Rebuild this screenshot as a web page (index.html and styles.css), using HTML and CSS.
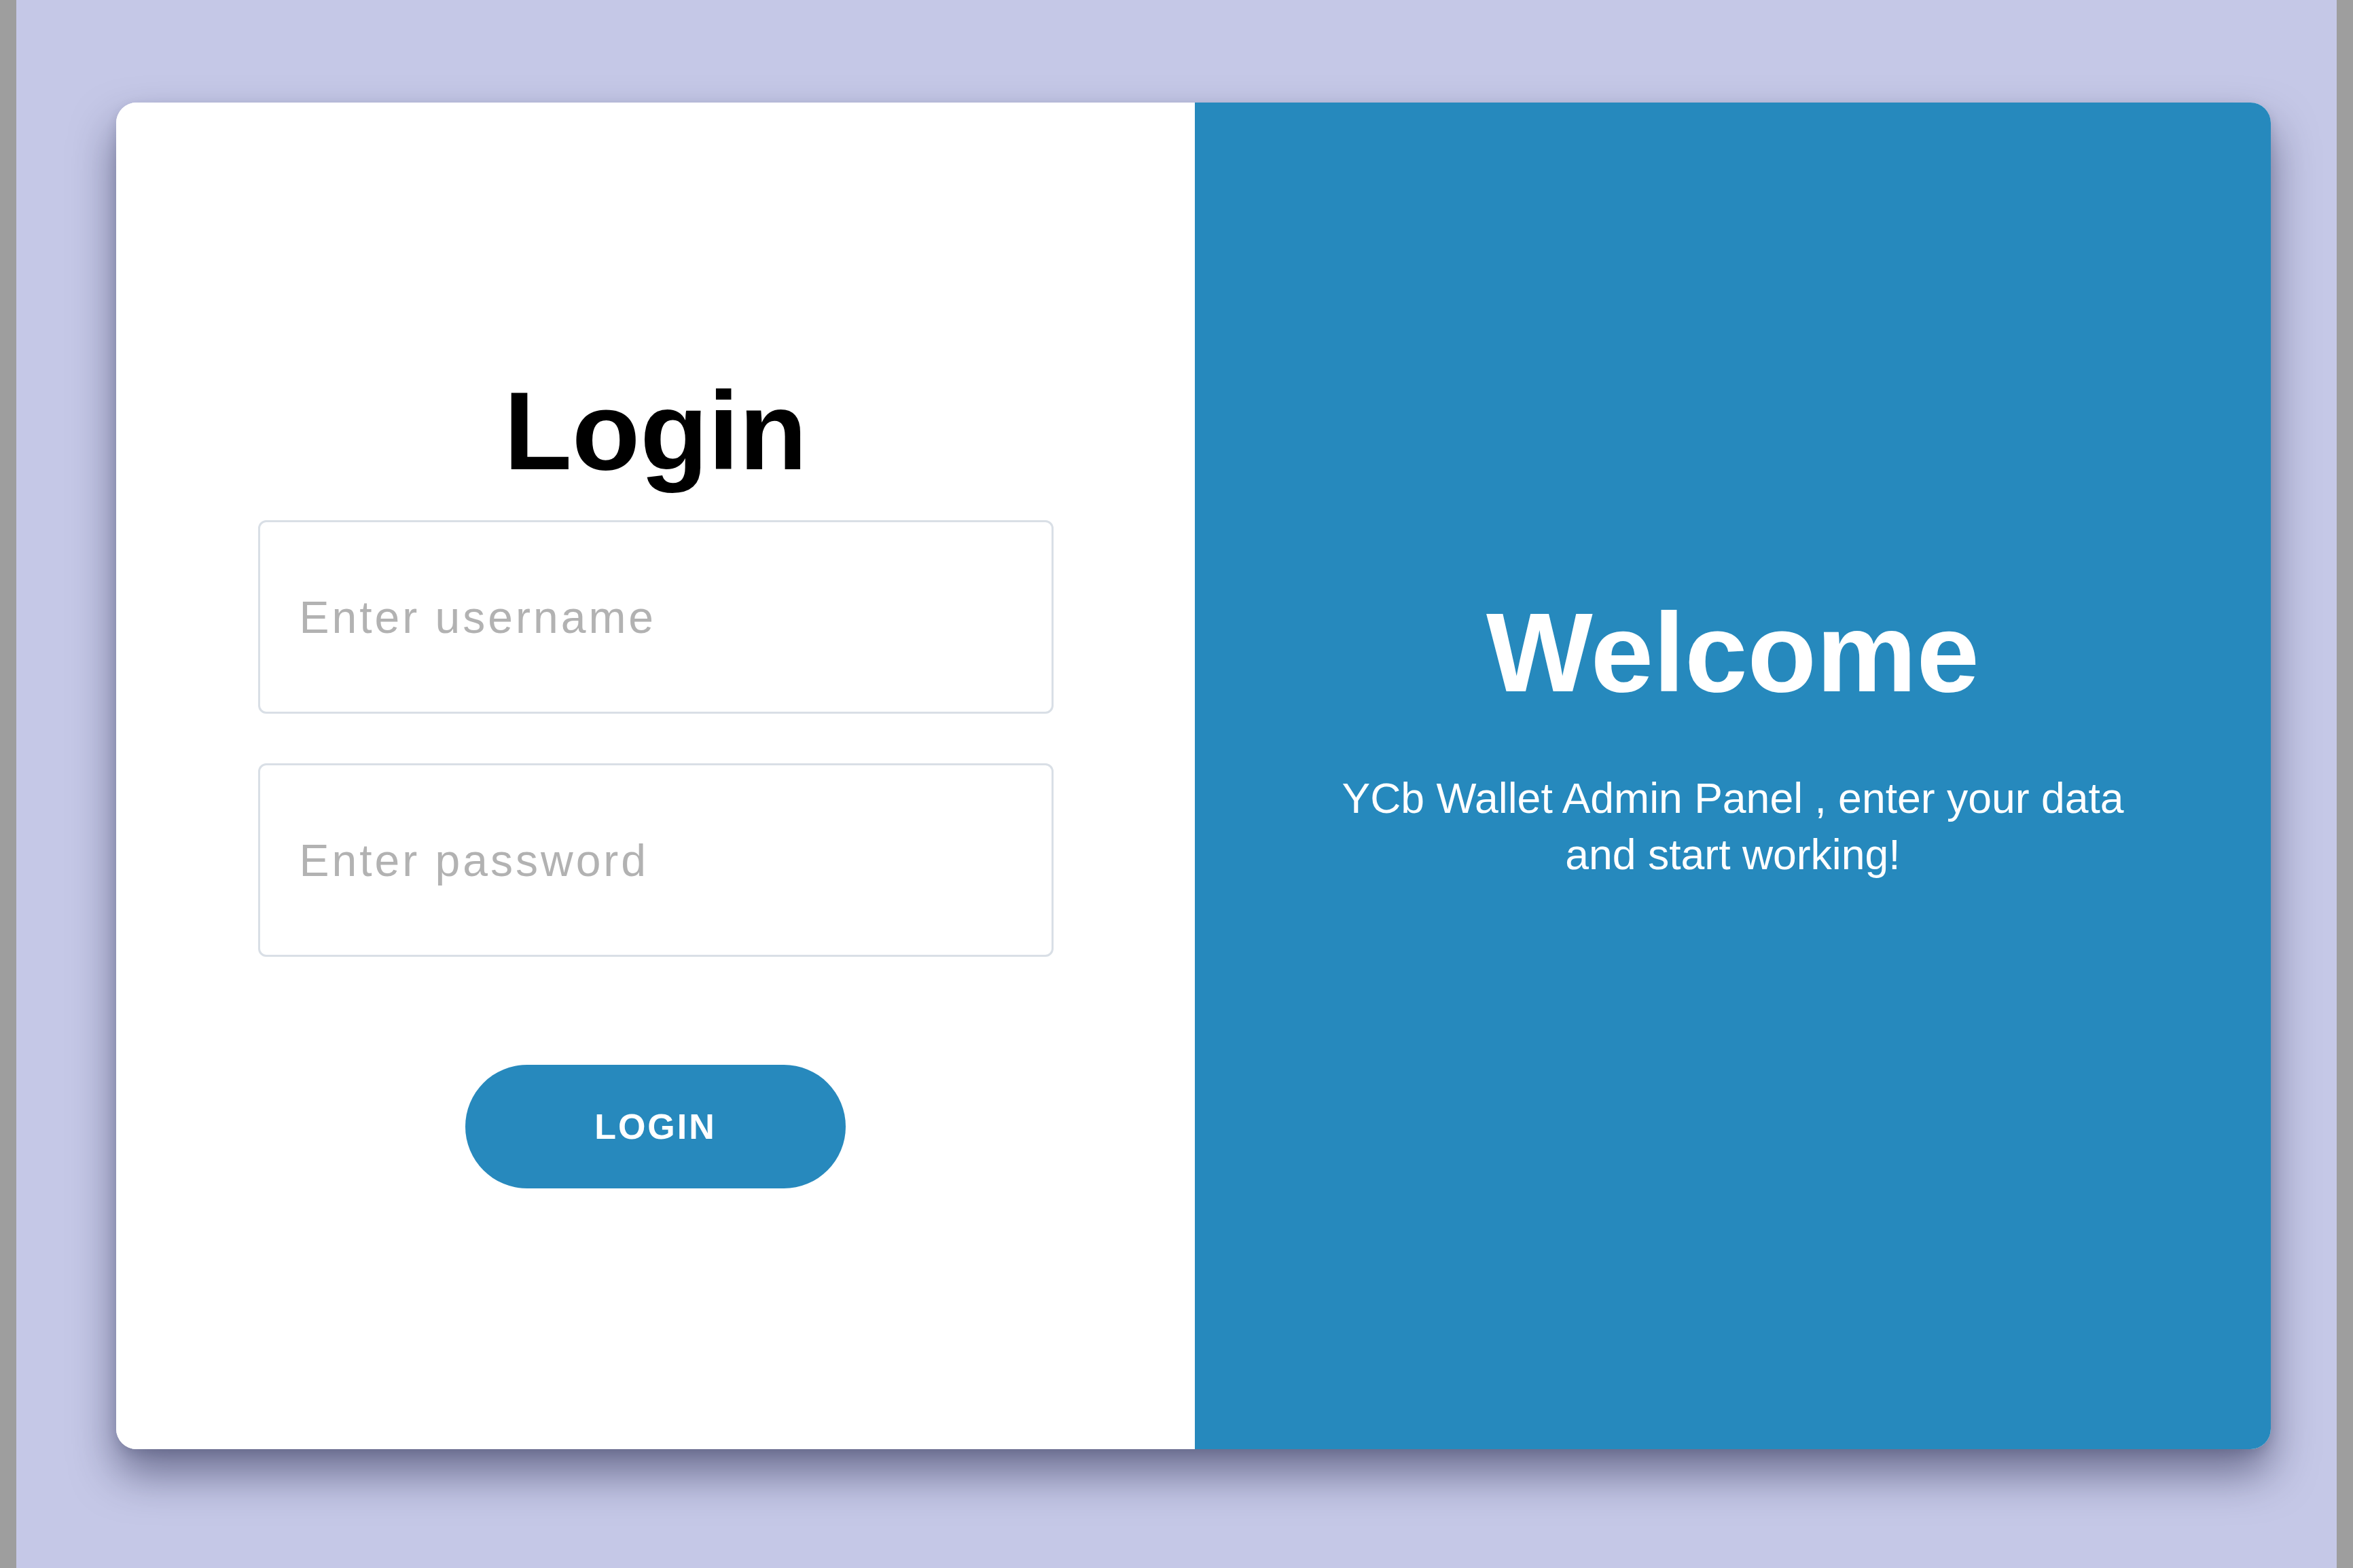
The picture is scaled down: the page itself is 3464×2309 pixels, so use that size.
FILE: index.html
```html
<!DOCTYPE html>
<html lang="en">
<head>
<meta charset="utf-8">
<title>YCb Wallet Admin Panel - Login</title>
<link rel="stylesheet" href="styles.css">
</head>
<body>
<main class="stage">
  <section class="card">
    <div class="panel panel-form">
      <form class="login-form" onsubmit="return false;">
        <h1 class="title">Login</h1>
        <input class="field" type="text" placeholder="Enter username">
        <input class="field field-password" type="password" placeholder="Enter password">
        <button class="btn" type="submit">LOGIN</button>
      </form>
    </div>
    <div class="panel panel-welcome">
      <h1 class="welcome-title">Welcome</h1>
      <p class="welcome-text">YCb Wallet Admin Panel , enter your data and start working!</p>
    </div>
  </section>
</main>
</body>
</html>
```

FILE: styles.css
```css
* {
  box-sizing: border-box;
}

html, body {
  margin: 0;
  padding: 0;
  height: 100%;
}

body {
  background: #9e9e9e;
  font-family: "Liberation Sans", Arial, sans-serif;
}

.stage {
  margin: 0 24px;
  height: 100vh;
  background: #c5c8e7;
  display: flex;
  padding: 151px 97px 175px 147px;
}

.card {
  flex: 1;
  display: flex;
  border-radius: 30px;
  overflow: hidden;
  background: #ffffff;
  box-shadow: 0 36px 64px rgba(20, 22, 60, 0.5), 0 6px 16px rgba(20, 22, 60, 0.12);
}

.panel {
  display: flex;
  flex-direction: column;
  align-items: center;
  justify-content: center;
}

.panel-form {
  flex: 0 0 1588px;
  background: #ffffff;
}

.login-form {
  width: 1171px;
  display: flex;
  flex-direction: column;
  align-items: center;
  padding-top: 6px;
}

.title {
  margin: 0 0 37px;
  font-size: 164px;
  font-weight: 700;
  line-height: normal;
  color: #000000;
}

.field {
  width: 100%;
  height: 285px;
  border: 3px solid #d9dfe6;
  border-radius: 12px;
  background: #ffffff;
  padding: 0 58px;
  font-family: "Liberation Sans", Arial, sans-serif;
  font-size: 66px;
  letter-spacing: 4px;
  color: #333333;
  outline: none;
}

.field::placeholder {
  color: #b2b2b2;
}

.field-password {
  margin-top: 73px;
}

.btn {
  margin-top: 159px;
  width: 560px;
  height: 182px;
  border: none;
  border-radius: 91px;
  background: #2789bd;
  color: #ffffff;
  font-family: "Liberation Sans", Arial, sans-serif;
  font-size: 52px;
  font-weight: 700;
  letter-spacing: 3px;
  cursor: pointer;
}

.panel-welcome {
  flex: 1;
  background: #2689bd;
  color: #ffffff;
  padding: 0 190px;
  text-align: center;
}

.welcome-title {
  margin: 0 0 78px;
  font-size: 166px;
  font-weight: 700;
  line-height: normal;
}

.welcome-text {
  margin: 0 0 120px;
  font-size: 62.5px;
  line-height: 83px;
}
```
